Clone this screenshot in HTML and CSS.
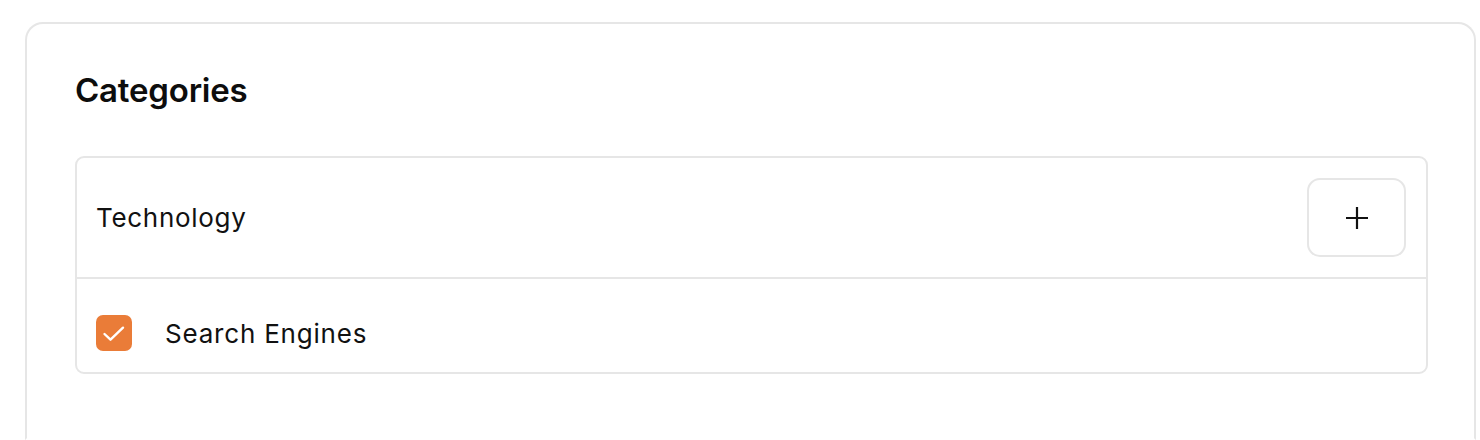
FILE: index.html
```html
<!DOCTYPE html>
<html lang="en">
<head>
<meta charset="utf-8">
<title>Categories</title>
<link rel="stylesheet" href="styles.css">
</head>
<body>
<div class="page">
  <section class="card">
    <h2 class="title">Categories</h2>
    <div class="group">
      <div class="group-head">
        <span class="group-name">Technology</span>
        <button class="add-btn" aria-label="Add">
          <svg width="24" height="24" viewBox="0 0 24 24" fill="none" stroke="#111" stroke-width="2.2" stroke-linecap="butt"><path d="M12 1v22M1 12h22"/></svg>
        </button>
      </div>
      <label class="item">
        <span class="check">
          <svg width="36" height="36" viewBox="0 0 36 36" fill="none" stroke="#fff" stroke-width="2.4" stroke-linecap="round" stroke-linejoin="round"><path d="M8.5 19l6 5.7L27 12.7"/></svg>
        </span>
        <span class="item-name">Search Engines</span>
      </label>
    </div>
  </section>
</div>
</body>
</html>
```

FILE: styles.css
```css
* { box-sizing: border-box; }
html, body { margin: 0; padding: 0; background: #fff; }
body {
  font-family: Inter, "Noto Sans", "Liberation Sans", sans-serif;
  color: #111;
  width: 1480px;
  height: 440px;
  overflow: hidden;
}
.page {
  padding: 22px 4px 0 25px;
}
.card {
  border: 2px solid #e6e6e6;
  border-radius: 18px;
  padding: 46px 46px 0 48px;
  height: 418px;
  border-bottom-color: transparent;
  border-bottom-left-radius: 0;
  border-bottom-right-radius: 0;
  background: #fff;
}
.title {
  margin: 0 0 46px 0;
  font-size: 33px;
  font-weight: 600;
  line-height: 40px;
  letter-spacing: -0.2px;
  color: #0d0d0d;
}
.group {
  border: 2px solid #e6e6e6;
  border-radius: 9px;
}
.group-head {
  display: flex;
  align-items: center;
  justify-content: space-between;
  padding: 20px 20px 20px 19px;
  height: 121px;
  border-bottom: 2px solid #e6e6e6;
}
.group-name {
  font-size: 26px;
  font-weight: 400;
  letter-spacing: 0.7px;
  color: #111;
}
.add-btn {
  width: 99px;
  height: 79px;
  border: 2px solid #e6e6e6;
  border-radius: 13px;
  background: #fff;
  display: flex;
  align-items: center;
  justify-content: center;
  padding: 0;
  cursor: pointer;
}
.item {
  display: flex;
  align-items: center;
  gap: 33px;
  padding: 36px 19px 21px 19px;
}
.check {
  width: 36px;
  height: 36px;
  border-radius: 7px;
  background: #ea7c38;
  display: flex;
  align-items: center;
  justify-content: center;
  flex: none;
}
.item-name {
  font-size: 26px;
  letter-spacing: 0.8px;
  color: #111;
}
```
